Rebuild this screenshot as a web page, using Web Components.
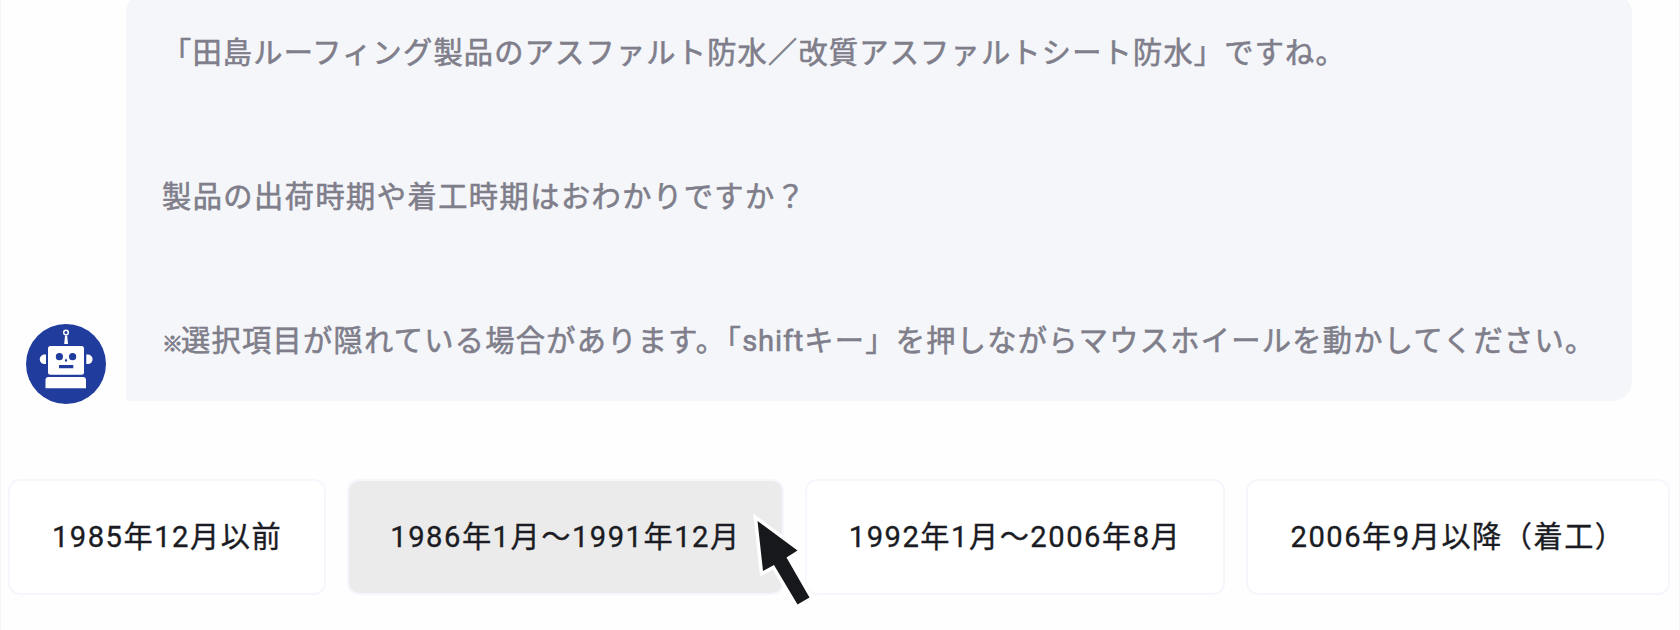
<!DOCTYPE html>
<html lang="ja">
<head>
<meta charset="utf-8">
<title>チャットボット</title>
<style>
html,body{margin:0;height:630px;overflow:hidden;background:#fefefe}
body{font-family:Roboto,"Noto Sans CJK JP",sans-serif;font-size:29.2px;letter-spacing:1.5px}
</style>
</head>
<body>
<chat-window>
  <chat-message>
    <bot-avatar slot="avatar"></bot-avatar>
    <message-line style="letter-spacing:1.23px;padding-top:.5px">「田島ルーフィング製品のアスファルト防水／改質アスファルトシート防水」ですね。</message-line>
    <message-line>製品の出荷時期や着工時期はおわかりですか？</message-line>
    <message-line style="letter-spacing:1.32px"><small-mark>※</small-mark>選択項目が隠れている場合があります。「<span style="letter-spacing:.8px">shift</span>キー」を押しながらマウスホイールを動かしてください。</message-line>
  </chat-message>
  <choice-button slot="choices" style="width:318px">1985年12月以前</choice-button>
  <choice-button slot="choices" style="width:437px" active>1986年1月〜1991年12月<mouse-pointer slot="pointer"></mouse-pointer></choice-button>
  <choice-button slot="choices" style="width:420px">1992年1月〜2006年8月</choice-button>
  <choice-button slot="choices" style="width:424px">2006年9月以降（着工）</choice-button>
</chat-window>
<script>
const define = (name, html) => customElements.define(name, class extends HTMLElement {
  constructor() {
    super();
    this.attachShadow({ mode: 'open' }).innerHTML = html;
  }
});

define('chat-window', `
<style>
:host{display:flex;flex-direction:column;box-sizing:border-box;width:1680px;height:630px;overflow:hidden;border:solid #f7f7fb;border-width:0 1px}
.choices{display:flex;gap:21px;margin:78px 0 0 7px}
</style>
<slot></slot>
<div class="choices"><slot name="choices"></slot></div>`);

define('chat-message', `
<style>
:host{display:flex;align-items:flex-end;height:408px;margin-top:-7px;padding-left:25px;gap:20px}
.avatar{flex:none;margin-bottom:-3px;line-height:0}
.bubble{box-sizing:border-box;width:1506px;height:408px;padding:35.5px 0 0 36px;background:#f4f6fa;color:#7f7e8a;border-radius:20px 20px 20px 4px;display:flex;flex-direction:column;gap:96px}
</style>
<div class="avatar"><slot name="avatar"></slot></div>
<div class="bubble"><slot></slot></div>`);

define('message-line', `
<style>:host{display:block;height:48px;line-height:48px;white-space:nowrap;-webkit-text-stroke:.6px currentColor}</style><slot></slot>`);

define('small-mark', `
<style>:host{display:inline-block;width:19px;font-size:21px;letter-spacing:0;font-weight:500;line-height:1;-webkit-text-stroke:.9px currentColor}</style><slot></slot>`);

define('bot-avatar', `
<style>:host{display:block;width:80px;height:80px}</style>
<svg width="80" height="80" viewBox="0 0 80 80">
  <circle cx="40" cy="40" r="40" fill="#203c9c"/>
  <g fill="#fff">
    <rect x="22" y="22" width="36" height="28.7" rx="2.5"/>
    <path d="M20 30.5v9.6h-1.5a4.8 4.8 0 0 1 0-9.6zM60.3 30.5v9.6h1.5a4.8 4.8 0 0 0 0-9.6z"/>
    <path d="M22.5 53h34.5q3 0 3 3v8.2H19.5V56q0-3 3-3z"/>
    <path d="M39 11.5h2.2l.8 8.5h-3.8z"/>
  </g>
  <circle cx="40" cy="8.5" r="2.3" fill="#203c9c" stroke="#fff" stroke-width="1.5"/>
  <g fill="#203c9c">
    <circle cx="33.4" cy="32.7" r="3.6"/><circle cx="46.6" cy="32.7" r="3.6"/>
    <path d="M40 34.5l1.2 1.7-.7 1.5h-1l-.7-1.5zM33 41h14.3v3.2H33z"/>
  </g>
</svg>`);

define('choice-button', `
<style>
:host{position:relative;display:flex;flex:none;align-items:center;justify-content:center;box-sizing:border-box;height:116px;padding-bottom:6px;border:2px solid #f6f6fc;border-radius:12px;background:#fff;color:#1b1c23;white-space:nowrap;-webkit-text-stroke:.35px currentColor}
:host([active]){background:#ebebeb;z-index:1}
</style>
<span><slot></slot></span><slot name="pointer"></slot>`);

define('mouse-pointer', `
<style>:host{position:absolute;left:403px;top:31px;width:60px;height:100px;line-height:0}</style>
<svg width="60" height="100" viewBox="0 0 60 100">
  <path d="M5.5 9L45.5 38.5 34.5 45.5 57.5 85.5 45.5 92.5 22 53 11 59z" fill="#fff" stroke="#fff" stroke-width="7"/>
  <path d="M5.5 9L45.5 38.5 34.5 45.5 57.5 85.5 45.5 92.5 22 53 11 59z" fill="#17181b"/>
</svg>`);
</script>
</body>
</html>
